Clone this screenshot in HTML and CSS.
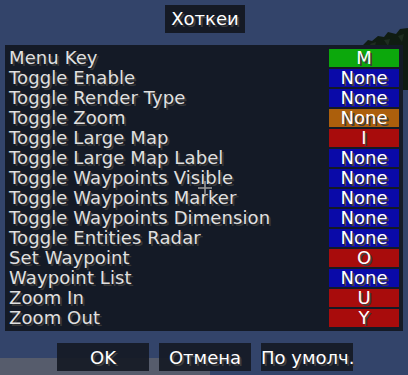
FILE: index.html
```html
<!DOCTYPE html>
<html lang="ru">
<head>
  <meta charset="UTF-8">
  <title>Хоткеи</title>
  <link rel="stylesheet" href="styles.css">
</head>
<body>
  <div class="scene">
    <svg class="foliage" width="50" height="90" viewBox="0 0 50 90">
      <path d="M4 46 L10 40 L14 41 L20 36 L26 37 L30 32 L38 34 L42 29 L50 28 L50 90 L30 90 L28 70 L20 62 L12 58 L6 54 Z" fill="#101c12"/>
      <path d="M12 44 L18 42 L16 50 Z M26 40 L32 39 L30 46 Z M40 36 L46 34 L44 42 Z" fill="#1e2d20"/>
    </svg>
    <div class="ground"></div>
    <div class="crosshair"></div>

    <div class="title-wrap">
      <div class="title">Хоткеи</div>
    </div>

    <div class="panel">
      <div class="row"><span class="label">Menu Key</span><span class="key green">M</span></div>
      <div class="row"><span class="label">Toggle Enable</span><span class="key blue">None</span></div>
      <div class="row"><span class="label">Toggle Render Type</span><span class="key blue">None</span></div>
      <div class="row"><span class="label">Toggle Zoom</span><span class="key orange">None</span></div>
      <div class="row"><span class="label">Toggle Large Map</span><span class="key red">I</span></div>
      <div class="row"><span class="label">Toggle Large Map Label</span><span class="key blue">None</span></div>
      <div class="row"><span class="label">Toggle Waypoints Visible</span><span class="key blue">None</span></div>
      <div class="row"><span class="label">Toggle Waypoints Marker</span><span class="key blue">None</span></div>
      <div class="row"><span class="label">Toggle Waypoints Dimension</span><span class="key blue">None</span></div>
      <div class="row"><span class="label">Toggle Entities Radar</span><span class="key blue">None</span></div>
      <div class="row"><span class="label">Set Waypoint</span><span class="key red">O</span></div>
      <div class="row"><span class="label">Waypoint List</span><span class="key blue">None</span></div>
      <div class="row"><span class="label">Zoom In</span><span class="key red">U</span></div>
      <div class="row"><span class="label">Zoom Out</span><span class="key red">Y</span></div>
    </div>

    <div class="actions">
      <button class="btn">OK</button>
      <button class="btn">Отмена</button>
      <button class="btn">По умолч.</button>
    </div>
  </div>
</body>
</html>
```

FILE: styles.css
```css
* {
  box-sizing: border-box;
  margin: 0;
  padding: 0;
}
body {
  width: 408px;
  height: 375px;
  overflow: hidden;
  background: #33446a;
  font-family: 'DejaVu Sans', sans-serif;
  font-size: 18px;
}
.scene {
  position: relative;
  width: 408px;
  height: 375px;
}
/* background bits */
.foliage {
  position: absolute;
  left: 358px;
  top: 0;
}
.ground {
  position: absolute;
  left: 0;
  top: 358px;
  width: 210px;
  height: 17px;
  background: #565c6c;
}
/* crosshair drawn with two thin bars */
.crosshair {
  position: absolute;
  left: 198px;
  top: 181px;
  width: 14px;
  height: 14px;
  z-index: 2;
}
.crosshair::before,
.crosshair::after {
  content: "";
  position: absolute;
  background: rgba(150, 150, 150, 0.8);
}
.crosshair::before {
  left: 6px;
  top: 0;
  width: 2px;
  height: 14px;
}
.crosshair::after {
  left: 0;
  top: 6px;
  width: 14px;
  height: 2px;
}
/* title */
.title-wrap {
  position: relative;
  display: flex;
  justify-content: center;
  padding-top: 5px;
  padding-left: 2px;
}
.title {
  width: 80px;
  height: 28px;
  background: #151a25;
  color: #fff;
  text-align: center;
  line-height: 28px;
  text-shadow: 2px 2px 0 #3f3f3f;
}
/* key list */
.panel {
  position: relative;
  margin: 12px 5px 0 5px;
  width: 398px;
  height: 286px;
  padding: 4px;
  background: #141a26;
  display: flex;
  flex-direction: column;
  gap: 2px;
}
.row {
  display: flex;
  justify-content: space-between;
  align-items: center;
  height: 18px;
}
.label {
  color: #e0e0e0;
  line-height: 18px;
  letter-spacing: 0.1px;
  text-shadow: 2px 2px 0 #383838;
}
.key {
  width: 70px;
  height: 18px;
  line-height: 18px;
  text-align: center;
  color: #fff;
  text-shadow: 2px 2px 0 #3f3f3f;
}
.green { background: #0ca80c; }
.blue { background: #0a0aa8; }
.orange { background: #ac5f0c; }
.red { background: #a80c0c; }
/* bottom buttons */
.actions {
  position: relative;
  display: flex;
  justify-content: center;
  gap: 10px;
  margin-top: 12px;
  padding-left: 2px;
}
.btn {
  width: 92px;
  height: 28px;
  border: none;
  background: rgba(21, 26, 37, 0.92);
  color: #fff;
  font-family: inherit;
  font-size: 18px;
  text-shadow: 2px 2px 0 #3f3f3f;
  white-space: nowrap;
}
```
